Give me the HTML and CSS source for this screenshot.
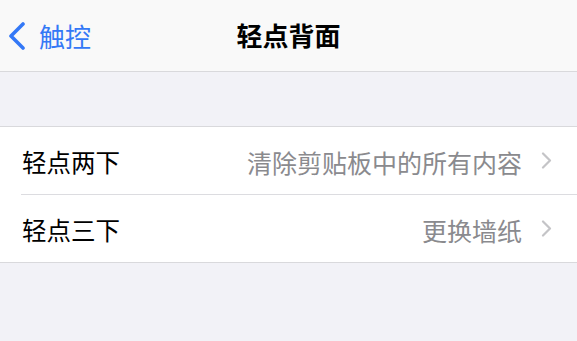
FILE: index.html
```html
<!DOCTYPE html>
<html lang="zh-CN">
<head>
<meta charset="utf-8">
<link rel="stylesheet" href="styles.css">
</head>
<body>
<div class="screen">
  <header class="nav">
    <div class="back">
      <svg class="back-icon" width="18" height="28" viewBox="0 0 18 28"><path d="M15 2 L3 14 L15 26" fill="none" stroke="#3478f6" stroke-width="3.6" stroke-linecap="round" stroke-linejoin="round"/></svg>
      <span class="back-label">触控</span>
    </div>
    <div class="title">轻点背面</div>
  </header>
  <div class="gap"></div>
  <section class="group">
    <div class="row">
      <span class="label">轻点两下</span>
      <span class="value">清除剪贴板中的所有内容</span>
      <svg class="chev" width="11" height="17" viewBox="0 0 11 17"><path d="M2 1.5 L9 8.5 L2 15.5" fill="none" stroke="#c4c4c7" stroke-width="2.2" stroke-linecap="round" stroke-linejoin="round"/></svg>
    </div>
    <div class="row">
      <span class="label">轻点三下</span>
      <span class="value">更换墙纸</span>
      <svg class="chev" width="11" height="17" viewBox="0 0 11 17"><path d="M2 1.5 L9 8.5 L2 15.5" fill="none" stroke="#c4c4c7" stroke-width="2.2" stroke-linecap="round" stroke-linejoin="round"/></svg>
    </div>
  </section>
</div>
</body>
</html>
```

FILE: styles.css
```css
* { box-sizing: border-box; }
html, body {
  margin: 0;
  padding: 0;
  background: #f2f2f7;
  font-family: "Noto Sans CJK SC", "Noto Sans", sans-serif;
}
.screen {
  width: 577px;
  height: 341px;
  overflow: hidden;
  background: #f2f2f7;
}
.nav {
  position: relative;
  height: 72px;
  background: #f9f9f9;
  border-bottom: 1px solid #d9d9dc;
  display: flex;
  align-items: center;
  justify-content: center;
}
.back {
  position: absolute;
  left: 8px;
  top: 0;
  height: 71px;
  display: flex;
  align-items: center;
  gap: 13px;
  color: #3478f6;
}
.back-label {
  font-size: 26px;
  line-height: 1;
}
.title {
  font-size: 26px;
  font-weight: 700;
  color: #000;
  line-height: 1;
  margin-top: -1px;
}
.gap {
  height: 54px;
}
.group {
  background: #fff;
  border-top: 1px solid #d9d9dc;
  border-bottom: 1px solid #d9d9dc;
}
.row {
  position: relative;
  height: 67px;
  display: flex;
  align-items: center;
  padding: 0 25px 0 22px;
}
.row + .row {
  height: 68px;
  padding-top: 1px;
}
.row + .row::before {
  content: "";
  position: absolute;
  left: 21px;
  right: 0;
  top: 0;
  height: 1px;
  background: #dcdce0;
}
.label {
  flex: 1;
  font-size: 24.5px;
  color: #000;
  line-height: 1;
  padding-top: 4px;
}
.value {
  font-size: 25px;
  color: #8a8a8e;
  line-height: 1;
  padding-top: 4px;
  margin-right: 19px;
}
.chev {
  display: block;
}
```
